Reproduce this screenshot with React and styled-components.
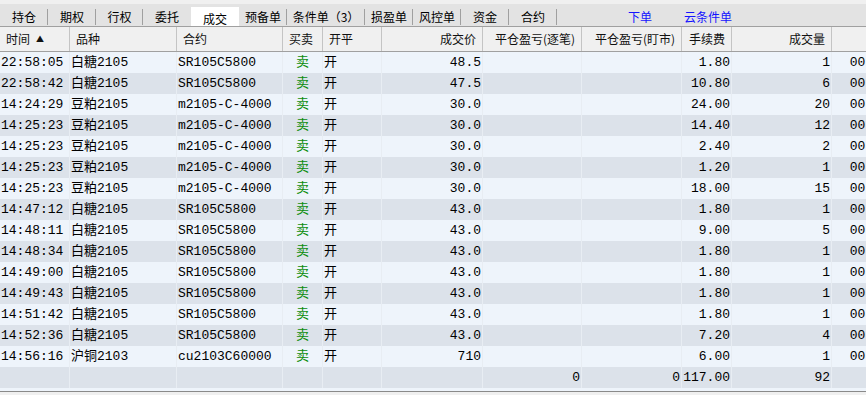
import React from 'react';
import styled, { createGlobalStyle } from 'styled-components';

const Global = createGlobalStyle`
  html, body { margin: 0; padding: 0; background: #f0f0f0; }
  body { font-family: "Noto Sans CJK SC", "Liberation Sans", sans-serif; }
  * { box-sizing: border-box; }
`;

const COLS = [
  { title: '时间', w: 70, align: 'left', sort: true },
  { title: '品种', w: 107, align: 'left' },
  { title: '合约', w: 106, align: 'left' },
  { title: '买卖', w: 40, align: 'left', body: 'center' },
  { title: '开平', w: 59, align: 'left' },
  { title: '成交价', w: 101, align: 'right' },
  { title: '平仓盈亏(逐笔)', w: 99, align: 'right' },
  { title: '平仓盈亏(盯市)', w: 100, align: 'right' },
  { title: '手续费', w: 50, align: 'right' },
  { title: '成交量', w: 100, align: 'right' },
  { title: '成交编号', w: 132, align: 'right', pad: 4 },
];

const TEMPLATE = COLS.map((c) => `${c.w}px`).join(' ');

const SR = ['白糖2105', 'SR105C5800'];
const M = ['豆粕2105', 'm2105-C-4000'];

const TRADES = [
  ['22:58:05', ...SR, '48.5', '1.80', '1', '00120605330121'],
  ['22:58:42', ...SR, '47.5', '10.80', '6', '00120605530223'],
  ['14:24:29', ...M, '30.0', '24.00', '20', '00310144290512'],
  ['14:25:23', ...M, '30.0', '14.40', '12', '00310145230613'],
  ['14:25:23', ...M, '30.0', '2.40', '2', '00310145230614'],
  ['14:25:23', ...M, '30.0', '1.20', '1', '00310145230615'],
  ['14:25:23', ...M, '30.0', '18.00', '15', '00310145230616'],
  ['14:47:12', ...SR, '43.0', '1.80', '1', '00310147120721'],
  ['14:48:11', ...SR, '43.0', '9.00', '5', '00310148110722'],
  ['14:48:34', ...SR, '43.0', '1.80', '1', '00310148340723'],
  ['14:49:00', ...SR, '43.0', '1.80', '1', '00310149000724'],
  ['14:49:43', ...SR, '43.0', '1.80', '1', '00310149430725'],
  ['14:51:42', ...SR, '43.0', '1.80', '1', '00310151420726'],
  ['14:52:36', ...SR, '43.0', '7.20', '4', '00310152360727'],
  ['14:56:16', '沪铜2103', 'cu2103C60000', '710', '6.00', '1', '00310156160831'],
];

const TABS = [
  { label: '持仓', w: 48 },
  { label: '期权', w: 48 },
  { label: '行权', w: 47 },
  { label: '委托', w: 48 },
  { label: '成交', w: 48, active: true },
  { label: '预备单', w: 48 },
  { label: '条件单（3）', w: 78 },
  { label: '损盈单', w: 48 },
  { label: '风控单', w: 48 },
  { label: '资金', w: 48 },
  { label: '合约', w: 48 },
];

const Page = styled.div`
  width: 866px;
  height: 395px;
  overflow: hidden;
  background: #f0f0f0;
  display: flex;
  flex-direction: column;
`;

const TabBar = styled.div`
  height: 26px;
  flex: none;
  padding-top: 4px;
  background: #f0f0f0;
  display: flex;
`;

const TabStrip = styled.div`
  flex: 1;
  display: flex;
  align-items: stretch;
  background: #e3e3e3;
`;

const Tab = styled.div`
  position: relative;
  width: ${(p) => p.$w}px;
  flex: none;
  display: flex;
  align-items: center;
  justify-content: center;
  padding-top: 3px;
  margin-top: ${(p) => (p.$active ? 3 : 0)}px;
  background: ${(p) => (p.$active ? '#ffffff' : 'transparent')};
  font-size: 12px;
  color: #000;
  white-space: nowrap;
  &::after {
    content: '';
    display: ${(p) => (p.$sep ? 'block' : 'none')};
    position: absolute;
    right: 0;
    top: 5px;
    bottom: 1px;
    width: 1px;
    background: #a0a0a0;
  }
`;

const LinkTab = styled.span`
  margin-left: ${(p) => p.$gap}px;
  align-self: center;
  padding-top: 3px;
  font-size: 12px;
  color: #1414ff;
  white-space: nowrap;
`;

const Grid = styled.div`
  flex: none;
  height: 366px;
  border-top: 1px solid #a0a0a0;
  border-bottom: 1px solid #8a8a8a;
  background: #eef4fb;
  overflow: hidden;
`;

const HeadRow = styled.div`
  display: grid;
  grid-template-columns: ${TEMPLATE};
  height: 25px;
  background: #f0f0f0;
  border-bottom: 1px solid #a0a0a0;
`;

const HeadCell = styled.div`
  height: 24px;
  line-height: 24px;
  padding: 0 6px;
  text-align: ${(p) => p.$align};
  border-right: 1px solid #c4c4c4;
  font-size: 12px;
  color: #111;
  white-space: nowrap;
  overflow: hidden;
`;

const SortMark = styled.span`
  font-size: 8px;
  margin-left: 6px;
  vertical-align: 2px;
`;

const Row = styled.div`
  display: grid;
  grid-template-columns: ${TEMPLATE};
  height: 21px;
  background: ${(p) => (p.$alt ? '#dce2ea' : '#eef4fb')};
`;

const Cell = styled.div`
  height: 21px;
  line-height: 22px;
  padding: 0 ${(p) => p.$pad}px 0 1px;
  text-align: ${(p) => p.$align};
  border-right: 1px solid #e8edf3;
  font-family: "Liberation Mono", "Noto Sans CJK SC", monospace;
  font-size: 13px;
  color: ${(p) => (p.$side ? '#0a8c0a' : '#000')};
  white-space: nowrap;
  overflow: hidden;
`;

function DataRow({ values, alt }) {
  return (
    <Row $alt={alt}>
      {values.map((v, i) => (
        <Cell
          key={i}
          $align={COLS[i].body || COLS[i].align}
          $pad={COLS[i].pad || 1}
          $side={i === 3 && v !== ''}
        >
          {v}
        </Cell>
      ))}
    </Row>
  );
}

export default function App() {
  return (
    <>
      <Global />
      <Page>
        <TabBar>
          <TabStrip>
            {TABS.map((t, i) => {
              const next = TABS[i + 1];
              const sep = !t.active && !(next && next.active);
              return (
                <Tab key={t.label} $w={t.w} $active={t.active} $sep={sep}>
                  {t.label}
                </Tab>
              );
            })}
            <LinkTab $gap={71}>下单</LinkTab>
            <LinkTab $gap={32}>云条件单</LinkTab>
          </TabStrip>
        </TabBar>
        <Grid>
          <HeadRow>
            {COLS.map((c) => (
              <HeadCell key={c.title} $align={c.align}>
                {c.title}
                {c.sort && <SortMark>▲</SortMark>}
              </HeadCell>
            ))}
          </HeadRow>
          {TRADES.map((t, i) => (
            <DataRow
              key={i}
              alt={i % 2 === 1}
              values={[t[0], t[1], t[2], '卖', '开', t[3], '', '', t[4], t[5], t[6]]}
            />
          ))}
          <DataRow alt values={['', '', '', '', '', '', '0', '0', '117.00', '92', '']} />
        </Grid>
      </Page>
    </>
  );
}
